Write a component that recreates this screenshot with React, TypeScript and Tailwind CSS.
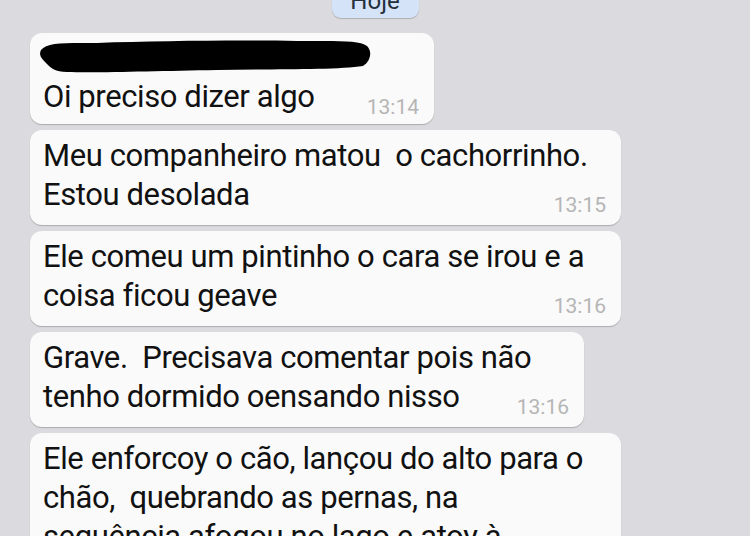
import React from "react";

interface Message {
  lines: string[];
  time?: string;
  width: string;
  redacted?: boolean;
}

const messages: Message[] = [
  { lines: ["Oi preciso dizer algo"], time: "13:14", width: "w-[404px]", redacted: true },
  { lines: ["Meu companheiro matou\u00a0 o cachorrinho.", "Estou desolada"], time: "13:15", width: "w-[591px]" },
  { lines: ["Ele comeu um pintinho o cara se irou e a", "coisa ficou geave"], time: "13:16", width: "w-[591px]" },
  { lines: ["Grave.\u00a0 Precisava comentar pois não", "tenho dormido oensando nisso"], time: "13:16", width: "w-[554px]" },
  {
    lines: [
      "Ele enforcoy o cão, lançou do alto para o",
      "chão,\u00a0 quebrando as pernas, na",
      "sequência afogou  no lago e atoy à",
    ],
    width: "w-[591px]",
  },
];

function Redaction() {
  return (
    <svg width="335" height="36" viewBox="0 0 335 36" className="block -ml-[6px]">
      <path
        d="M4 12 C 10 4, 30 5, 60 5 C 120 3, 200 2, 260 3 C 300 3, 322 2, 330 8 C 336 14, 333 24, 326 28 C 300 32, 240 31, 180 32 C 120 33, 60 35, 30 34 C 18 34, 14 30, 10 26 C 6 22, 1 18, 4 12 Z"
        fill="#000"
      />
    </svg>
  );
}

function Bubble({ msg }: { msg: Message }) {
  return (
    <div
      className={`${msg.width} shrink-0 bg-[#fafafa] rounded-[12px] shadow-[0_1px_1px_rgba(0,0,0,0.22)] pl-[13px] pr-[15px] ${
        msg.redacted ? "pt-[5px] pb-[8px]" : "pt-[6px] pb-[11px]"
      }`}
    >
      {msg.redacted && <Redaction />}
      <div className={`grid ${msg.redacted ? "mt-[3px]" : ""}`}>
        <div className="[grid-area:1/1] text-[31px] leading-[39px] text-[#111] whitespace-nowrap tracking-[-0.4px]">
          {msg.lines.map((l, i) => (
            <div key={i}>{l}</div>
          ))}
        </div>
        {msg.time && (
          <span className="[grid-area:1/1] self-end justify-self-end text-[21px] leading-[21px] text-[#b5b5b5] translate-y-[2px]">
            {msg.time}
          </span>
        )}
      </div>
    </div>
  );
}

export default function App() {
  return (
    <div
      className="w-[750px] h-[536px] overflow-hidden bg-[#dbdbdf] flex flex-col"
      style={{ fontFamily: "Roboto, 'Liberation Sans', sans-serif" }}
    >
      <div className="shrink-0 self-center -mt-[18px] w-[87px] h-[36px] rounded-[9px] bg-[#d4e3f8] shadow-[0_1px_1px_rgba(0,0,0,0.2)] flex items-end justify-center pb-[5px]">
        <span className="text-[24px] leading-[24px] text-[#25303d]">Hoje</span>
      </div>
      <div className="shrink-0 flex flex-col gap-[6px] pl-[30px] mt-[15px]">
        {messages.map((m, i) => (
          <Bubble key={i} msg={m} />
        ))}
      </div>
    </div>
  );
}
